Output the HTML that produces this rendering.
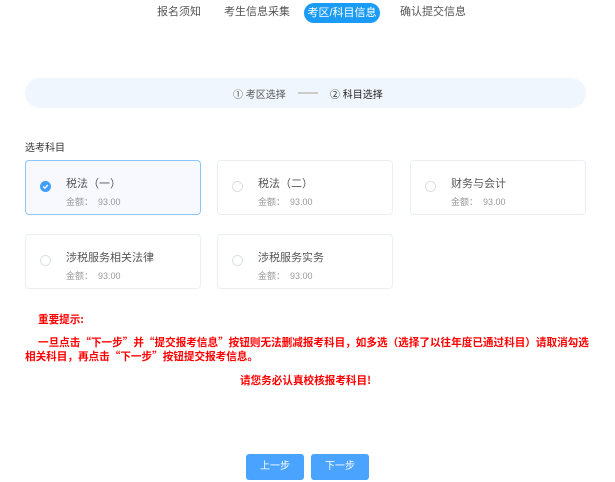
<!DOCTYPE html>
<html><head><meta charset="utf-8"><style>
body{margin:0;width:615px;height:482px;background:#fff;font-family:"Liberation Sans","Noto Sans CJK SC",sans-serif;position:relative;overflow:hidden}
.a{position:absolute;white-space:nowrap}
.tab{font-size:11px;color:#555;top:5px;line-height:14px}
.pill{left:304px;top:3px;width:76px;height:20px;border-radius:10px;background:#1a9bf5;color:#fff;font-size:11px;line-height:20px;text-align:center}
.bar{left:25px;top:78px;width:561px;height:30px;border-radius:15px;background:#f0f6fd}
.card{position:absolute;width:174px;height:53px;border:1px solid #ebeef5;border-radius:4px;background:#fff}
.card.on{border-color:#8cc5ff;background:#f7f9ff}
.r{position:absolute;left:14px;top:20px;width:9px;height:9px;border:1px solid #dcdfe6;border-radius:50%;background:#fff}
.t{position:absolute;left:40px;top:14px;font-size:11px;color:#555}
.m{position:absolute;left:40px;top:34px;font-size:9px;color:#999}
.red{color:#f00;font-weight:bold;font-size:10.6px;font-family:"Noto Sans CJK SC",sans-serif;line-height:14px}
.btn{position:absolute;top:454px;width:58px;height:26px;border-radius:3px;background:#4aa3ff;color:#fff;font-size:10px;line-height:26px;text-align:center}
</style></head><body>
<div class="a tab" style="left:157px">报名须知</div>
<div class="a tab" style="left:224px">考生信息采集</div>
<div class="a pill">考区/科目信息</div>
<div class="a tab" style="left:400px">确认提交信息</div>
<div class="a bar"></div>
<div class="a" style="left:233px;top:86px;font-size:10px;color:#555">① 考区选择</div>
<div class="a" style="left:298px;top:92px;width:20px;height:2px;background:#ccc"></div>
<div class="a" style="left:330px;top:86px;font-size:10px;color:#222">② 科目选择</div>
<div class="a" style="left:25px;top:139px;font-size:10px;color:#333">选考科目</div>
<div class="card on" style="left:25px;top:160px"><div class="r" style="background:#409eff;border-color:#409eff"><svg width="9" height="9" viewBox="0 0 9 9" style="position:absolute;left:0;top:0"><path d="M2.2 4.6 L3.9 6.1 L6.8 3" stroke="#fff" stroke-width="1.3" fill="none"/></svg></div><div class="t">税法（一）</div><div class="m">金额：&nbsp; 93.00</div></div>
<div class="card" style="left:217px;top:160px"><div class="r"></div><div class="t">税法（二）</div><div class="m">金额：&nbsp; 93.00</div></div>
<div class="card" style="left:410px;top:160px"><div class="r"></div><div class="t">财务与会计</div><div class="m">金额：&nbsp; 93.00</div></div>
<div class="card" style="left:25px;top:234px"><div class="r"></div><div class="t">涉税服务相关法律</div><div class="m">金额：&nbsp; 93.00</div></div>
<div class="card" style="left:217px;top:234px"><div class="r"></div><div class="t">涉税服务实务</div><div class="m">金额：&nbsp; 93.00</div></div>
<div class="a red" style="left:38px;top:313px">重要提示:</div>
<div class="a red" style="left:38px;top:336px">一旦点击“下一步”并“提交报考信息”按钮则无法删减报考科目，如多选（选择了以往年度已通过科目）请取消勾选</div>
<div class="a red" style="left:25px;top:350px">相关科目，再点击“下一步”按钮提交报考信息。</div>
<div class="a red" style="left:240px;top:374px">请您务必认真校核报考科目!</div>
<div class="btn" style="left:246px">上一步</div>
<div class="btn" style="left:311px">下一步</div>
</body></html>
